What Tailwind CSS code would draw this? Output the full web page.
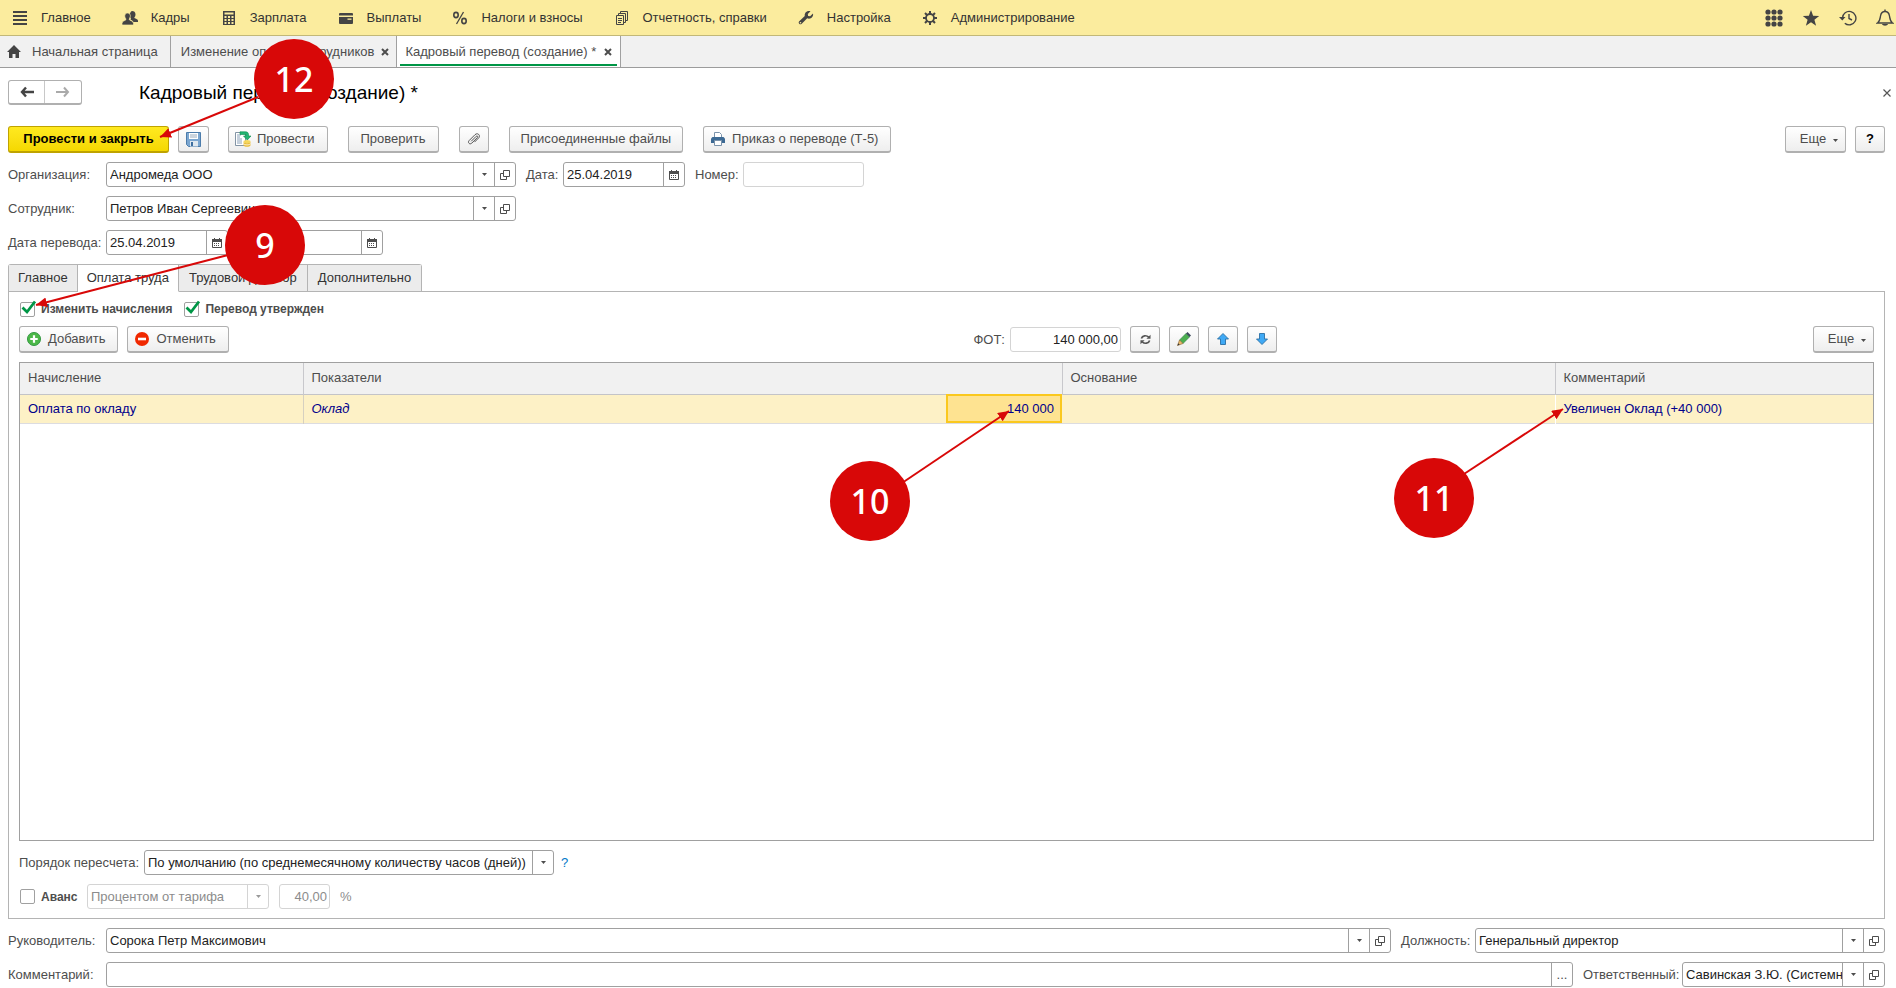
<!DOCTYPE html>
<html lang="ru">
<head>
<meta charset="utf-8">
<title>Кадровый перевод (создание) *</title>
<script src="https://cdn.jsdelivr.net/npm/@tailwindcss/browser@4"></script>
</head>
<body class="relative flex min-h-screen flex-col overflow-x-hidden bg-white font-['Liberation_Sans',Arial,sans-serif] text-[13px] leading-4 text-[#4d4d4d]">

<svg class="hidden" aria-hidden="true">
  <symbol id="caret" viewBox="0 0 5 3"><path d="M0 0h5L2.500 3z" fill="currentColor"/></symbol>
  <symbol id="open" viewBox="0 0 10 10"><path d="M3.500.5h6v6h-6zM3.500 3.500h-3v6h6v-3" fill="none" stroke="currentColor"/></symbol>
  <symbol id="calendar" viewBox="0 0 10 10"><path d="M.5 3.500h9v6h-9z" fill="none" stroke="currentColor"/><path d="M0 1h10v3H0zM2 0h1v1H2zM7 0h1v1H7zM2 5h1v1H2zM4 5h1v1H4zM6 5h1v1H6zM2 7h1v1H2zM4 7h1v1H4zM6 7h1v1H6z" fill="currentColor"/></symbol>
  <symbol id="check" viewBox="0 0 16 15"><path d="M1.500 7.500L6 12L14 1.500" fill="none" stroke="#009646" stroke-width="2.800"/></symbol>
  <symbol id="close" viewBox="0 0 8 8"><path d="M1 1l6 6M7 1L1 7" fill="none" stroke="currentColor" stroke-width="2"/></symbol>
</svg>

<header class="flex h-9 shrink-0 items-center justify-between border-b border-[#c2b878] bg-[#fbec9e] pr-[2px] pl-3 text-[#333]">
  <nav class="flex items-center gap-[31px]">
    <a href="#" class="flex items-center gap-[13px]"><svg class="h-4 w-4" viewBox="0 0 16 16"><path d="M1 1h14v2H1zM1 5h14v2H1zM1 9h14v2H1zM1 13h14v2H1z" fill="#444"/></svg>Главное</a>
    <a href="#" class="flex items-center gap-[13px]"><svg class="h-4 w-4" viewBox="0 0 16 16" fill="#444"><path d="M10 1c2 0 3.500 1 3.500 3.500 0 1.500-.8 2.500-1.200 3.200 0 .8 3.700 1 3.700 3V12h-4.500c-.5-1.500-2-1.800-3-2.300L9 8.500C7.500 7.500 7.200 2 10 1z"/><path d="M5.500 3C8 3 8.600 5 8.300 6.600 8 8 7.200 8.600 7.200 9.500c.5 1.300 4.300 1.200 4.300 4V15H0v-1.500c0-2.800 3.500-2.700 4-4 0-.9-1-1.500-1.200-3C2.500 4.500 3.500 3 5.500 3z" stroke="#fbec9e" stroke-width=".7"/></svg>Кадры</a>
    <a href="#" class="flex items-center gap-[13px]"><svg class="h-4 w-4" viewBox="0 0 16 16"><path d="M2 1h12v14H2z" fill="#444"/><path d="M3.500 2.500h9v2h-9zM3.500 6h2v2h-2zM7 6h2v2H7zM10.500 6h2v2h-2zM3.500 9h2v2h-2zM7 9h2v2H7zM10.500 9h2v2h-2zM3.500 12h2v2h-2zM7 12h2v2H7zM10.500 12h2v2h-2z" fill="#fbec9e"/></svg>Зарплата</a>
    <a href="#" class="flex items-center gap-[13px]"><svg class="h-4 w-4" viewBox="0 0 16 16"><path d="M1 4a1 1 0 011-1h12a1 1 0 011 1v1.500H1zM1 7h14v6a1 1 0 01-1 1H2a1 1 0 01-1-1z" fill="#444"/><path d="M9.500 8.500h4v1.300h-4z" fill="#fbec9e"/></svg>Выплаты</a>
    <a href="#" class="flex items-center gap-[13px]"><svg class="h-4 w-4" viewBox="0 0 16 16" fill="none" stroke="#444" stroke-width="1.600"><ellipse cx="4" cy="5" rx="2.200" ry="2.600"/><ellipse cx="12" cy="11" rx="2.200" ry="2.600"/><path d="M11.500 2l-7 12" stroke-width="1.300"/></svg>Налоги и взносы</a>
    <a href="#" class="flex items-center gap-[13px]"><svg class="h-4 w-4" viewBox="0 0 16 16" fill="none" stroke="#444"><path d="M2.500 5.500h7v9h-7zM4.500 5.500v-2h7v9h-2M6.500 3.500v-2h7v9h-2M4 8.500h4M4 10.500h4M4 12.500h3"/></svg>Отчетность, справки</a>
    <a href="#" class="flex items-center gap-[13px]"><svg class="h-4 w-4" viewBox="0 0 16 16"><path d="M12.500 1.200L9.800 3.900l.3 2 2 .4L15 3.600c.6 2.600-1.300 5.100-4 5.100-.7 0-1.300-.1-1.800-.4L3.500 14a1.800 1.800 0 01-2.500-2.500L6.800 6C6.200 3.300 8.500.2 12.500 1.200z" fill="#444"/><circle cx="2.500" cy="12.800" r=".8" fill="#fbec9e"/></svg>Настройка</a>
    <a href="#" class="flex items-center gap-[13px]"><svg class="h-4 w-4" viewBox="0 0 16 16" fill="none" stroke="#444"><circle cx="8" cy="8" r="4" stroke-width="1.800"/><path d="M8 1v3M8 12v3M1 8h3M12 8h3M3 3l2.200 2.200M10.800 10.800L13 13M3 13l2.200-2.200M10.800 5.200L13 3" stroke-width="2"/></svg>Администрирование</a>
  </nav>
  <div class="flex items-center gap-[19px]">
    <button type="button" aria-label="Разделы"><svg class="h-[18px] w-[18px]" viewBox="0 0 18 18" fill="#444"><circle cx="3" cy="3" r="2.600"/><circle cx="9" cy="3" r="2.600"/><circle cx="15" cy="3" r="2.600"/><circle cx="3" cy="9" r="2.600"/><circle cx="9" cy="9" r="2.600"/><circle cx="15" cy="9" r="2.600"/><circle cx="3" cy="15" r="2.600"/><circle cx="9" cy="15" r="2.600"/><circle cx="15" cy="15" r="2.600"/></svg></button>
    <button type="button" aria-label="Избранное"><svg class="h-[18px] w-[18px]" viewBox="0 0 18 18"><path d="M9 1l2.100 5.800 6.100.2-4.800 3.800 1.700 5.900L9 13.300l-5.100 3.400 1.700-5.900L.8 7l6.100-.2z" fill="#444"/></svg></button>
    <button type="button" aria-label="История"><svg class="h-[18px] w-[18px]" viewBox="0 0 18 18" fill="none" stroke="#444" stroke-width="1.400"><path d="M3.500 9a6.700 6.700 0 112.300 5.200M10 5v4.500l3 1.500"/><path d="M0 8h6.500L3.300 11.500z" fill="#444" stroke="none"/></svg></button>
    <button type="button" aria-label="Уведомления"><svg class="h-[18px] w-[18px]" viewBox="0 0 18 18" fill="none" stroke="#444" stroke-width="1.400"><path d="M1.500 14c2.500-1.500 2.500-4 3-7 .4-2.500 1.500-4.500 4.500-4.500s4.100 2 4.500 4.500c.5 3 .5 5.500 3 7z"/><path d="M9 .5v2"/><path d="M6 15h6c-.5 2.300-5.500 2.300-6 0z" fill="#444" stroke="none"/></svg></button>
  </div>
</header>

<div class="flex h-8 shrink-0 items-stretch border-b border-[#9c9c9c] bg-[#f1f1f1]">
  <a href="#" class="flex items-center gap-[11px] border-r border-[#a0a0a0] pr-3 pl-[7px]"><svg class="h-[14px] w-[14px]" viewBox="0 0 14 14"><path d="M7 0l7 7h-2v6H8.500V9h-3v4H2V7H0z" fill="#444"/></svg>Начальная страница</a>
  <a href="#" class="flex items-center gap-[7px] border-r border-[#a0a0a0] pr-[7px] pl-[10px]">Изменение оплаты сотрудников<svg class="h-2 w-2"><use href="#close"/></svg></a>
  <a href="#" class="flex flex-col border-r border-[#a0a0a0] bg-white px-[3px] pb-[1px]"><span class="flex flex-1 items-center gap-2 border-b-2 border-[#009646] px-[5px] pt-[3px]">Кадровый перевод (создание) *<svg class="h-2 w-2"><use href="#close"/></svg></span></a>
</div>

<main class="flex flex-1 flex-col pr-[11px] pb-px pl-2">
  <div class="mt-3 flex h-[25px] items-center">
    <div class="flex h-[25px] rounded-[3px] border border-b-2 border-[#b0b0b0]">
      <button type="button" aria-label="Назад" class="flex w-9 items-center justify-center border-r border-[#c8c8c8]"><svg class="h-3 w-[14px]" viewBox="0 0 14 12"><path d="M6 1.500L2 6l4 4.500M2 6h12" fill="none" stroke="#444" stroke-width="2.400"/></svg></button>
      <button type="button" aria-label="Вперед" class="flex w-9 items-center justify-center"><svg class="h-3 w-[14px]" viewBox="0 0 14 12"><path d="M8 1.500L12 6l-4 4.500M12 6H0" fill="none" stroke="#aaa" stroke-width="2"/></svg></button>
    </div>
    <h1 class="ml-[57px] text-[19px] leading-6 text-black">Кадровый перевод (создание) *</h1>
    <button type="button" aria-label="Закрыть" class="-mr-[10px] ml-auto p-1"><svg class="h-2 w-2" viewBox="0 0 8 8"><path d="M.5.5l7 7M7.500.5l-7 7" stroke="#555" stroke-width="1.200"/></svg></button>
  </div>

  <div class="mt-[21px] flex h-[27px] items-stretch">
    <button type="button" class="w-[161px] rounded-[3px] border border-b-2 border-[#bfa300] bg-linear-to-b from-[#ffe91f] to-[#f5d800] font-bold text-black">Провести и закрыть</button>
    <button type="button" aria-label="Записать" class="ml-[9px] flex w-[31px] items-center justify-center rounded-[3px] border border-b-2 border-[#b0b0b0] bg-linear-to-b from-white to-[#eee]"><svg class="h-[15px] w-[15px]" viewBox="0 0 15 15"><path d="M.5.5h14v14h-12l-2-2z" fill="#7ba6d0" stroke="#4c7cab"/><path d="M3 1h9v6H3z" fill="#fff"/><path d="M4 3h7M4 5h7" stroke="#9ab"/><path d="M4 9h8v5.500H4z" fill="#dfe8f0"/><path d="M5 10h2v4H5z" fill="#3e6fa0"/></svg></button>
    <button type="button" class="ml-[19px] flex items-center gap-[6px] rounded-[3px] border border-b-2 border-[#b0b0b0] bg-linear-to-b from-white to-[#eee] pr-3 pl-[6px]"><svg class="h-4 w-4" viewBox="0 0 16 16"><path d="M.5 1.500h10v13H.5z" fill="#fff" stroke="#8394a5"/><path d="M2 4h4M2 6h3M2 8h5M2 10h5M2 12h5" stroke="#8aa0b8"/><path d="M5 .8h5.500c2 0 3 1 3 3V5H16l-3.700 4L8.500 5h2.300V3.500H5z" fill="#22b573" stroke="#0a8a4a" stroke-width=".6"/><ellipse cx="12" cy="10.500" rx="3.500" ry="1.500" fill="#f5d75a"/><path d="M8.500 11v3.500c1 1.800 6 1.800 7 0V11c-1 1.500-6 1.500-7 0z" fill="#e9bd3c"/><path d="M8.500 12.800c1 1.500 6 1.500 7 0" stroke="#fff" stroke-width=".7" fill="none"/></svg>Провести</button>
    <button type="button" class="ml-5 rounded-[3px] border border-b-2 border-[#b0b0b0] bg-linear-to-b from-white to-[#eee] px-3">Проверить</button>
    <button type="button" aria-label="Файлы" class="ml-5 flex w-[30px] items-center justify-center rounded-[3px] border border-b-2 border-[#b0b0b0] bg-linear-to-b from-white to-[#eee]"><svg class="h-[14px] w-[14px]" viewBox="0 0 14 14"><path d="M4.200 9.800l5-5c1-1 2.200.2 1.200 1.200l-5.600 5.600c-2 2-4.600-.6-2.600-2.600L8 3.200c2.600-2.600 6 .8 3.700 3.200L7.500 10.600" transform="translate(0 -.5)" fill="none" stroke="#555"/></svg></button>
    <button type="button" class="ml-5 rounded-[3px] border border-b-2 border-[#b0b0b0] bg-linear-to-b from-white to-[#eee] px-[11px]">Присоединенные файлы</button>
    <button type="button" class="ml-5 flex items-center gap-[7px] rounded-[3px] border border-b-2 border-[#b0b0b0] bg-linear-to-b from-white to-[#eee] pr-3 pl-[7px]"><svg class="h-[14px] w-[14px]" viewBox="0 0 14 14"><path d="M3.500 5V.5h5l2 2V5" fill="#fff" stroke="#7b93ab"/><path d="M0 6.500L1.500 5h11L14 6.500V11H0z" fill="#3d6a94"/><path d="M3.500 8.500h7v5h-7z" fill="#fff" stroke="#7b93ab"/></svg>Приказ о переводе (Т-5)</button>
    <button type="button" class="ml-auto flex w-[61px] items-center justify-center gap-[7px] rounded-[3px] border border-b-2 border-[#b0b0b0] bg-linear-to-b from-white to-[#eee] pl-[7px]">Еще<svg class="mt-[2px] h-[3px] w-[5px]"><use href="#caret"/></svg></button>
    <button type="button" class="ml-[9px] w-[30px] rounded-[3px] border border-b-2 border-[#b0b0b0] bg-linear-to-b from-white to-[#eee] font-bold text-black">?</button>
  </div>

  <div class="mt-[9px] flex h-[25px] items-center">
    <label for="org" class="w-[98px]">Организация:</label>
    <div class="flex h-full w-[410px] rounded-[3px] border border-[#a0a0a0]">
      <input id="org" value="Андромеда ООО" class="min-w-0 flex-1 px-[3px] text-[#222] outline-none">
      <button type="button" aria-label="Выбрать" class="flex w-[21px] items-center justify-center border-l border-[#a0a0a0]"><svg class="h-[3px] w-[5px]"><use href="#caret"/></svg></button>
      <button type="button" aria-label="Открыть" class="flex w-[21px] items-center justify-center border-l border-[#a0a0a0]"><svg class="h-[10px] w-[10px]"><use href="#open"/></svg></button>
    </div>
    <label for="date" class="ml-[10px] w-[37px]">Дата:</label>
    <div class="flex h-full w-[122px] rounded-[3px] border border-[#a0a0a0]">
      <input id="date" value="25.04.2019" class="min-w-0 flex-1 px-[3px] text-[#222] outline-none">
      <button type="button" aria-label="Календарь" class="flex w-[21px] items-center justify-center border-l border-[#a0a0a0]"><svg class="h-[10px] w-[10px]"><use href="#calendar"/></svg></button>
    </div>
    <label for="num" class="ml-[10px] w-12">Номер:</label>
    <input id="num" class="h-full w-[121px] rounded-[3px] border border-[#d4d4d4] px-[3px] outline-none">
  </div>

  <div class="mt-[9px] flex h-[25px] items-center">
    <label for="emp" class="w-[98px]">Сотрудник:</label>
    <div class="flex h-full w-[410px] rounded-[3px] border border-[#a0a0a0]">
      <input id="emp" value="Петров Иван Сергеевич" class="min-w-0 flex-1 px-[3px] text-[#222] outline-none">
      <button type="button" aria-label="Выбрать" class="flex w-[21px] items-center justify-center border-l border-[#a0a0a0]"><svg class="h-[3px] w-[5px]"><use href="#caret"/></svg></button>
      <button type="button" aria-label="Открыть" class="flex w-[21px] items-center justify-center border-l border-[#a0a0a0]"><svg class="h-[10px] w-[10px]"><use href="#open"/></svg></button>
    </div>
  </div>

  <div class="mt-[9px] flex h-[25px] items-center">
    <label for="from" class="w-[98px]">Дата перевода:</label>
    <div class="flex h-full w-[122px] rounded-[3px] border border-[#a0a0a0]">
      <input id="from" value="25.04.2019" class="min-w-0 flex-1 px-[3px] text-[#222] outline-none">
      <button type="button" aria-label="Календарь" class="flex w-[21px] items-center justify-center border-l border-[#a0a0a0]"><svg class="h-[10px] w-[10px]"><use href="#calendar"/></svg></button>
    </div>
    <div class="ml-[33px] flex h-full w-[122px] rounded-[3px] border border-[#a0a0a0]">
      <input aria-label="Дата окончания" class="min-w-0 flex-1 px-[3px] outline-none">
      <button type="button" aria-label="Календарь" class="flex w-[21px] items-center justify-center border-l border-[#a0a0a0]"><svg class="h-[10px] w-[10px]"><use href="#calendar"/></svg></button>
    </div>
  </div>

  <div role="tablist" class="z-10 mt-[9px] -mb-px flex h-7 self-start rounded-t-[3px] border-x border-t border-[#b4b4b4] text-[#333]">
    <button type="button" role="tab" class="border-r border-b border-[#b4b4b4] bg-[#ececec] px-[9px]">Главное</button>
    <button type="button" role="tab" aria-selected="true" class="border-r border-b border-r-[#b4b4b4] border-b-white bg-white px-[9px]">Оплата труда</button>
    <button type="button" role="tab" class="border-r border-b border-[#b4b4b4] bg-[#ececec] px-[10px]">Трудовой договор</button>
    <button type="button" role="tab" class="border-b border-[#b4b4b4] bg-[#ececec] px-[10px]">Дополнительно</button>
  </div>

  <section class="flex flex-1 flex-col border border-[#b4b4b4] px-[10px] pb-[9px]">
    <div class="mt-2 flex h-[18px] items-center text-[12px] font-bold">
      <label class="flex items-center gap-[6px]"><span class="relative ml-px flex h-[15px] w-[15px]"><input type="checkbox" checked class="h-[15px] w-[15px] appearance-none rounded-[2px] border border-[#a0a0a0]"><svg class="pointer-events-none absolute -top-[2px] left-px h-[15px] w-4"><use href="#check"/></svg></span>Изменить начисления</label>
      <label class="ml-3 flex items-center gap-[6px]"><span class="relative flex h-[15px] w-[15px]"><input type="checkbox" checked class="h-[15px] w-[15px] appearance-none rounded-[2px] border border-[#a0a0a0]"><svg class="pointer-events-none absolute -top-[2px] left-px h-[15px] w-4"><use href="#check"/></svg></span>Перевод утвержден</label>
    </div>

    <div class="mt-2 flex h-[27px] items-stretch">
      <button type="button" class="flex items-center gap-[7px] rounded-[3px] border border-b-2 border-[#b0b0b0] bg-linear-to-b from-white to-[#eee] pr-3 pl-[7px]"><svg class="h-[14px] w-[14px]" viewBox="0 0 15 15"><circle cx="7.500" cy="7.500" r="7" fill="#4cb848" stroke="#2f9440"/><path d="M7.500 3.500v8M3.500 7.500h8" stroke="#fff" stroke-width="2.400"/></svg>Добавить</button>
      <button type="button" class="ml-[9px] flex items-center gap-[7px] rounded-[3px] border border-b-2 border-[#b0b0b0] bg-linear-to-b from-white to-[#eee] pr-3 pl-[7px]"><svg class="h-[14px] w-[14px]" viewBox="0 0 14 14"><circle cx="7" cy="7" r="7" fill="#f02800"/><path d="M3 7h8" stroke="#fff" stroke-width="2.600"/></svg>Отменить</button>
      <div class="ml-auto flex items-stretch gap-[9px]">
        <div class="flex items-center gap-[5px]"><label for="fot">ФОТ:</label><input id="fot" value="140 000,00" class="h-[25px] w-[111px] rounded-[3px] border border-[#d4d4d4] px-[2px] text-right text-[#222] outline-none"></div>
        <button type="button" aria-label="Обновить" class="flex w-[30px] items-center justify-center rounded-[3px] border border-b-2 border-[#b0b0b0] bg-linear-to-b from-white to-[#eee]"><svg class="h-[11px] w-[11px]" viewBox="0 0 12 12" fill="none" stroke="#555" stroke-width="1.800"><path d="M1.500 5C2.500 1.500 7 1 9.500 3.500M10.500 7C9.500 10.500 5 11 2.500 8.500"/><path d="M11.500.8v4.500H7zM.5 11.200V6.700H5z" fill="#555" stroke="none"/></svg></button>
        <button type="button" aria-label="Изменить" class="flex w-[30px] items-center justify-center rounded-[3px] border border-b-2 border-[#b0b0b0] bg-linear-to-b from-white to-[#eee]"><svg class="h-[14px] w-[14px]" viewBox="0 0 14 14"><path d="M2.500 8L9 1.500 12.500 5 6 11.500z" fill="#4caf50" stroke="#2e7d43" stroke-width=".6"/><path d="M9 1.500L10.500 0 14 3.500 12.500 5z" fill="#3c4a5a"/><path d="M2.500 8L6 11.500.5 13.500z" fill="#e8b86a" stroke="#8a6530" stroke-width=".6"/><path d="M.5 13.500l.8-2.200 1.400 1.400z" fill="#333"/></svg></button>
        <button type="button" aria-label="Вверх" class="flex w-[30px] items-center justify-center rounded-[3px] border border-b-2 border-[#b0b0b0] bg-linear-to-b from-white to-[#eee]"><svg class="h-3 w-3" viewBox="0 0 12 12"><path d="M6 .5L11.500 6H8.500v5.500h-5V6H.5z" fill="#3fa9f5" stroke="#2a6fa5" stroke-width=".9"/></svg></button>
        <button type="button" aria-label="Вниз" class="flex w-[30px] items-center justify-center rounded-[3px] border border-b-2 border-[#b0b0b0] bg-linear-to-b from-white to-[#eee]"><svg class="h-3 w-3" viewBox="0 0 12 12"><path d="M6 11.500L.5 6h3V.5h5V6h3z" fill="#3fa9f5" stroke="#2a6fa5" stroke-width=".9"/></svg></button>
      </div>
      <div class="flex w-[597px] justify-end">
        <button type="button" class="flex w-[61px] items-center justify-center gap-[7px] rounded-[3px] border border-b-2 border-[#b0b0b0] bg-linear-to-b from-white to-[#eee] pl-[7px]">Еще<svg class="mt-[2px] h-[3px] w-[5px]"><use href="#caret"/></svg></button>
      </div>
    </div>

    <div class="mt-[9px] flex-1 border border-[#a0a0a0]">
      <table class="w-full table-fixed border-collapse text-left">
        <colgroup><col class="w-[283px]"><col><col class="w-[116px]"><col class="w-[493px]"><col class="w-[318px]"></colgroup>
        <thead>
          <tr class="h-[31px] border-b border-[#c4c4c8] bg-[#f1f1f1]">
            <th class="border-r border-[#c8c8cc] px-2 font-normal">Начисление</th>
            <th colspan="2" class="border-r border-[#c8c8cc] px-2 font-normal">Показатели</th>
            <th class="border-r border-[#c8c8cc] px-2 font-normal">Основание</th>
            <th class="px-2 font-normal">Комментарий</th>
          </tr>
        </thead>
        <tbody>
          <tr class="h-[29px] border-b border-[#dcdce0] bg-[#fdf1c6] text-[#00008b]">
            <td class="border-r border-[#d6d0c0] px-2">Оплата по окладу</td>
            <td class="px-2 italic">Оклад</td>
            <td class="bg-[#fee391] px-2 text-right outline-2 -outline-offset-2 outline-[#fac81e]">140 000</td>
            <td class="border-r border-white px-2"></td>
            <td class="px-2">Увеличен Оклад (+40 000)</td>
          </tr>
        </tbody>
      </table>
    </div>

    <div class="mt-[9px] flex h-[25px] items-center">
      <label for="recalc" class="w-[125px]">Порядок пересчета:</label>
      <div class="relative h-full">
        <select id="recalc" class="h-full w-[410px] appearance-none rounded-[3px] border border-[#a0a0a0] pr-6 pl-[3px] text-[#222] outline-none"><option>По умолчанию (по среднемесячному количеству часов (дней))</option></select>
        <span class="pointer-events-none absolute inset-y-px right-px flex w-[21px] items-center justify-center border-l border-[#a0a0a0]"><svg class="h-[3px] w-[5px]"><use href="#caret"/></svg></span>
      </div>
      <a href="#" class="ml-[7px] text-[#0078c8]">?</a>
    </div>

    <div class="mt-[9px] flex h-[25px] items-center">
      <label class="flex w-[68px] items-center gap-[6px] text-[12px] font-bold"><input type="checkbox" class="ml-px h-[15px] w-[15px] appearance-none rounded-[2px] border border-[#a0a0a0]">Аванс</label>
      <div class="relative h-full">
        <select disabled aria-label="Способ расчета аванса" class="h-full w-[182px] appearance-none rounded-[3px] border border-[#d4d4d4] pr-6 pl-[3px] text-[#8c8c8c] opacity-100 outline-none"><option>Процентом от тарифа</option></select>
        <span class="pointer-events-none absolute inset-y-px right-px flex w-[21px] items-center justify-center border-l border-[#d4d4d4] text-[#999]"><svg class="h-[3px] w-[5px]"><use href="#caret"/></svg></span>
      </div>
      <input disabled aria-label="Процент аванса" value="40,00" class="ml-[10px] h-full w-[51px] rounded-[3px] border border-[#d4d4d4] px-[2px] text-right text-[#8c8c8c]">
      <span class="ml-[10px] text-[#8c8c8c]">%</span>
    </div>
  </section>

  <div class="mt-[9px] flex h-[25px] items-center">
    <label for="head" class="w-[98px]">Руководитель:</label>
    <div class="flex h-full flex-1 rounded-[3px] border border-[#a0a0a0]">
      <input id="head" value="Сорока Петр Максимович" class="min-w-0 flex-1 px-[3px] text-[#222] outline-none">
      <button type="button" aria-label="Выбрать" class="flex w-[21px] items-center justify-center border-l border-[#a0a0a0]"><svg class="h-[3px] w-[5px]"><use href="#caret"/></svg></button>
      <button type="button" aria-label="Открыть" class="flex w-[21px] items-center justify-center border-l border-[#a0a0a0]"><svg class="h-[10px] w-[10px]"><use href="#open"/></svg></button>
    </div>
    <label for="post" class="ml-[10px] w-[74px]">Должность:</label>
    <div class="flex h-full w-[410px] rounded-[3px] border border-[#a0a0a0]">
      <input id="post" value="Генеральный директор" class="min-w-0 flex-1 px-[3px] text-[#222] outline-none">
      <button type="button" aria-label="Выбрать" class="flex w-[21px] items-center justify-center border-l border-[#a0a0a0]"><svg class="h-[3px] w-[5px]"><use href="#caret"/></svg></button>
      <button type="button" aria-label="Открыть" class="flex w-[21px] items-center justify-center border-l border-[#a0a0a0]"><svg class="h-[10px] w-[10px]"><use href="#open"/></svg></button>
    </div>
  </div>

  <div class="mt-[9px] flex h-[25px] items-center">
    <label for="comment" class="w-[98px]">Комментарий:</label>
    <div class="flex h-full flex-1 rounded-[3px] border border-[#a0a0a0]">
      <input id="comment" class="min-w-0 flex-1 px-[3px] text-[#222] outline-none">
      <button type="button" aria-label="Редактировать" class="w-[21px] border-l border-[#a0a0a0]">...</button>
    </div>
    <label for="resp" class="ml-[10px] w-[99px]">Ответственный:</label>
    <div class="flex h-full w-[203px] rounded-[3px] border border-[#a0a0a0]">
      <input id="resp" value="Савинская З.Ю. (Системн" class="min-w-0 flex-1 pl-[3px] text-[#222] outline-none">
      <button type="button" aria-label="Выбрать" class="flex w-[21px] items-center justify-center border-l border-[#a0a0a0]"><svg class="h-[3px] w-[5px]"><use href="#caret"/></svg></button>
      <button type="button" aria-label="Открыть" class="flex w-[21px] items-center justify-center border-l border-[#a0a0a0]"><svg class="h-[10px] w-[10px]"><use href="#open"/></svg></button>
    </div>
  </div>
</main>

<!-- Numbered step callouts with arrows -->
<div class="pointer-events-none absolute top-0 left-0 z-20 font-['Noto_Sans',sans-serif] text-[34px] leading-[80px] font-medium text-white">
  <svg class="absolute top-0 left-0 h-[600px] w-[1600px]" viewBox="0 0 1600 600" fill="none" stroke="#d80808" stroke-width="2">
    <defs><marker id="tip" markerUnits="userSpaceOnUse" markerWidth="12" markerHeight="12" refX="11" refY="5" orient="auto"><path d="M0 0l11 5L0 10z" fill="#d80808" stroke="none"/></marker></defs>
    <path d="M258 97L160 137" marker-end="url(#tip)"/>
    <path d="M228 255L36 305" marker-end="url(#tip)"/>
    <path d="M902 483L1009 411" marker-end="url(#tip)"/>
    <path d="M1464 474L1563 409" marker-end="url(#tip)"/>
  </svg>
  <div class="absolute top-[39px] left-[254px] h-20 w-20 rounded-full bg-[#d80808] text-center">12</div>
  <div class="absolute top-[205px] left-[225px] h-20 w-20 rounded-full bg-[#d80808] text-center">9</div>
  <div class="absolute top-[461px] left-[830px] h-20 w-20 rounded-full bg-[#d80808] text-center">10</div>
  <div class="absolute top-[458px] left-[1394px] h-20 w-20 rounded-full bg-[#d80808] text-center">11</div>
</div>
</body>
</html>
